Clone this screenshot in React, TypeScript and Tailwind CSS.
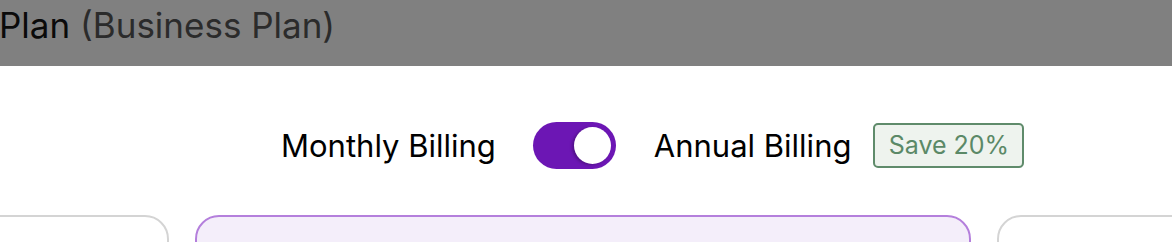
export default function App() {
  return (
    <div className="w-[1172px] h-[242px] overflow-hidden bg-white font-['Inter',sans-serif]">
      <div className="h-[66px] bg-[#808080] pt-[5px]">
        <h2 className="text-[35px] leading-[40px] text-[#0a0a0a] -ml-[1px] whitespace-nowrap">
          Plan <span className="text-[#2b2b2b]">(Business Plan)</span>
        </h2>
      </div>

      <div className="flex items-center pl-[281px] pt-[56px]">
        <span className="text-[31px] leading-none text-black">Monthly Billing</span>
        <button className="ml-[37px] w-[83px] h-[47px] rounded-full bg-[#6c16b4] flex items-center justify-end px-[5px]">
          <span className="w-[37px] h-[37px] rounded-full bg-white shadow-[-2px_1px_3px_rgba(0,0,0,0.25)]" />
        </button>
        <span className="ml-[38px] text-[31px] leading-none text-black">Annual Billing</span>
        <span className="ml-[22px] h-[45px] w-[151px] flex items-center justify-center rounded-[5px] border-2 border-[#5f8b6b] bg-[#eef3ee] text-[25px] text-[#5b8967]">
          Save 20%
        </span>
      </div>

      <div className="pt-[46px] overflow-hidden">
        <div className="flex gap-[26px] -ml-[607px]">
          <div className="w-[776px] h-[60px] shrink-0 rounded-[24px] border-2 border-[#d4d4d4] bg-white" />
          <div className="w-[776px] h-[60px] shrink-0 rounded-[24px] border-2 border-[#b47fdc] bg-[#f4eefa]" />
          <div className="w-[776px] h-[60px] shrink-0 rounded-[24px] border-2 border-[#d4d4d4] bg-white" />
        </div>
      </div>
    </div>
  );
}
